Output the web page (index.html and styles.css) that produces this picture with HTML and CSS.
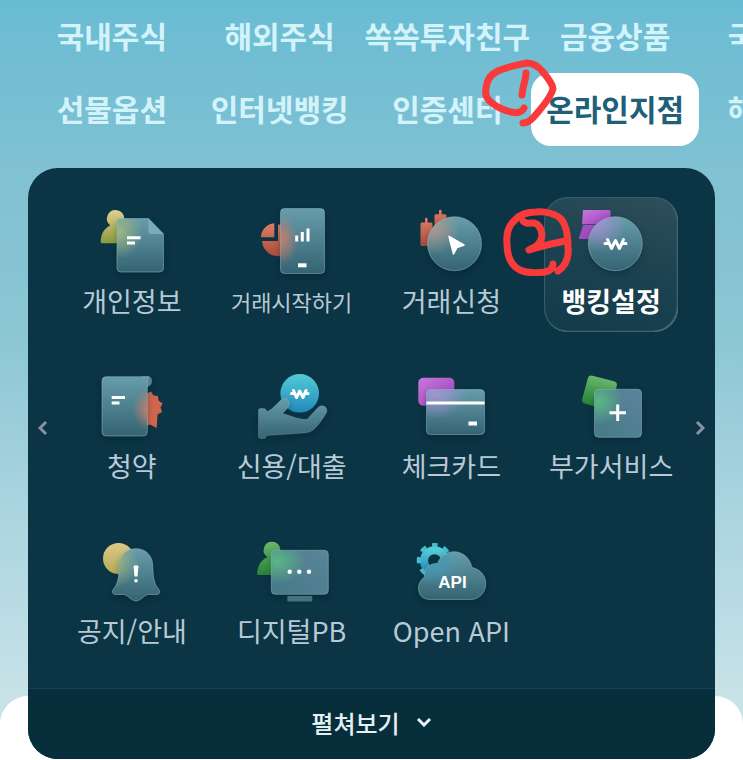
FILE: index.html
```html
<!DOCTYPE html>
<html lang="ko">
  <head>
    <meta charset="UTF-8" />
    <meta name="viewport" content="width=device-width, initial-scale=1.0" />
    <title>온라인지점</title>
    <link rel="stylesheet" href="styles.css">
  </head>
  <body>
    <nav class="tabs">
      <ul class="tab-list">
        <li><a href="#">국내주식</a></li>
        <li><a href="#">해외주식</a></li>
        <li><a href="#">쏙쏙투자친구</a></li>
        <li><a href="#">금융상품</a></li>
        <li><a href="#">국내주식</a></li>
        <li><a href="#">선물옵션</a></li>
        <li><a href="#">인터넷뱅킹</a></li>
        <li><a href="#">인증센터</a></li>
        <li>
          <a class="active" href="#">온라인지점</a>
          <svg class="mark mark1" viewBox="0 0 80 72" aria-hidden="true">
            <path d="M44 50 C42 54 38 55 34 54.500 C26 53 18 50 12 45 C6 41 5 35 6 30 C7 22 10 17 16 14 C24 9 38 7 47 5 C54 5 59 9 63 14 C68 20 73 27 73 31 C71 39 64 47 58 54 C53 60 49 65 43 65" />
            <path d="M46 15 C46 22 43 26 42 37" />
          </svg>
        </li>
        <li><a href="#">해외주식</a></li>
      </ul>
    </nav>

    <main class="panel">
      <div class="panel-body">
        <button class="arrow prev" type="button" aria-label="이전">
          <svg viewBox="0 0 10 16"><path d="M8 2L2 8L8 14" /></svg>
        </button>
        <ul class="menu">
          <li>
            <a class="item" href="#">
              <svg class="icon" viewBox="0 0 100 76" aria-hidden="true">
                <defs>
                  <linearGradient id="glass" x1="0" y1="0" x2="0" y2="1">
                    <stop offset="0" stop-color="#679dab" />
                    <stop offset="1" stop-color="#356372" />
                  </linearGradient>
                  <linearGradient id="glassBlue" x1="1" y1="0" x2="0" y2="1">
                    <stop offset="0" stop-color="#5b849b" />
                    <stop offset="1" stop-color="#457a86" />
                  </linearGradient>
                  <linearGradient id="yellow" x1="0" y1="0" x2="0" y2="1">
                    <stop offset="0" stop-color="#dfd28d" />
                    <stop offset="1" stop-color="#8b9a3c" />
                  </linearGradient>
                  <linearGradient id="sun" x1="0" y1="0" x2="0" y2="1">
                    <stop offset="0" stop-color="#dccb85" />
                    <stop offset="1" stop-color="#b5a958" />
                  </linearGradient>
                  <linearGradient id="red" x1="0" y1="0" x2="0" y2="1">
                    <stop offset="0" stop-color="#df7d67" />
                    <stop offset="1" stop-color="#a94c3b" />
                  </linearGradient>
                  <linearGradient id="purple" x1="0" y1="0" x2="1" y2="1">
                    <stop offset="0" stop-color="#c878db" />
                    <stop offset="1" stop-color="#9c40bd" />
                  </linearGradient>
                  <linearGradient id="green" x1="0" y1="0" x2="0" y2="1">
                    <stop offset="0" stop-color="#68b66b" />
                    <stop offset="1" stop-color="#278338" />
                  </linearGradient>
                  <linearGradient id="cyan" x1="0" y1="0" x2="0" y2="1">
                    <stop offset="0" stop-color="#52cbd9" />
                    <stop offset="1" stop-color="#2389b9" />
                  </linearGradient>
                  <radialGradient id="glowYellow" cx="0.05" cy="0.25" r="0.5">
                    <stop offset="0" stop-color="#a9bd7c" stop-opacity="0.85" />
                    <stop offset="1" stop-color="#a9bd7c" stop-opacity="0" />
                  </radialGradient>
                  <radialGradient id="glowRed" cx="0" cy="0.48" r="0.4">
                    <stop offset="0" stop-color="#d97e68" stop-opacity="0.9" />
                    <stop offset="1" stop-color="#d97e68" stop-opacity="0" />
                  </radialGradient>
                  <radialGradient id="glowSeal" cx="1" cy="0.55" r="0.35">
                    <stop offset="0" stop-color="#d97e68" stop-opacity="0.9" />
                    <stop offset="1" stop-color="#d97e68" stop-opacity="0" />
                  </radialGradient>
                  <radialGradient id="glowCandle" cx="0.1" cy="0.2" r="0.5">
                    <stop offset="0" stop-color="#b99a8e" stop-opacity="0.9" />
                    <stop offset="1" stop-color="#b99a8e" stop-opacity="0" />
                  </radialGradient>
                  <radialGradient id="glowPurple" cx="0.15" cy="0.1" r="0.55">
                    <stop offset="0" stop-color="#a793d6" stop-opacity="0.95" />
                    <stop offset="1" stop-color="#a793d6" stop-opacity="0" />
                  </radialGradient>
                  <radialGradient id="glowGreen" cx="0.1" cy="0.25" r="0.5">
                    <stop offset="0" stop-color="#5cbb83" stop-opacity="0.95" />
                    <stop offset="1" stop-color="#5cbb83" stop-opacity="0" />
                  </radialGradient>
                  <radialGradient id="glowCyan" cx="0.2" cy="0.25" r="0.45">
                    <stop offset="0" stop-color="#419bb9" stop-opacity="0.95" />
                    <stop offset="1" stop-color="#419bb9" stop-opacity="0" />
                  </radialGradient>
                </defs>
                <path fill="url(#yellow)" d="M33.700 5a8.700 8.700 0 0 1 8.700 8.700c0 3-1.400 5.300-3.400 6.900V38.300H20c-1 0-1.400-.6-1.400-1.500C19 29 22 23.500 28.200 20.500A8.700 8.700 0 0 1 33.700 5z" />
                <g class="glass">
                  <path fill="url(#glass)" d="M39 13.500H66.500L81.500 29V63a4 4 0 0 1-4 4H39a4 4 0 0 1-4-4V17.500a4 4 0 0 1 4-4z" />
                  <path fill="url(#glowYellow)" d="M39 13.500H66.500L81.500 29V63a4 4 0 0 1-4 4H39a4 4 0 0 1-4-4V17.500a4 4 0 0 1 4-4z" />
                </g>
                <path fill="#7aabbb" d="M66.500 13.500L81.500 29H69a2.500 2.500 0 0 1-2.500-2.500z" />
                <path class="line" d="M45 32.700H58.500M45 38H53" />
              </svg>
              <span class="label">개인정보</span>
            </a>
          </li>
          <li>
            <a class="item" href="#">
              <svg class="icon" viewBox="0 0 100 76" aria-hidden="true">
                <path fill="url(#red)" d="M32.300 18.300V32.300H19C19 25 25 18.800 32.300 18.300zM36 19.500V36H20A16 16 0 0 0 42 50V20.500C40 19.800 38 19.500 36 19.500z" />
                <g class="glass">
                  <rect fill="url(#glass)" x="38.500" y="3.500" width="44" height="65" rx="4" />
                  <rect fill="url(#glowRed)" x="38.500" y="3.500" width="44" height="65" rx="4" />
                </g>
                <path class="line" d="M54.700 30.500V36.500M60.300 27V36.500M66 23.500V36.500" />
                <path class="line thick" d="M56 60.300H64.500" />
              </svg>
              <span class="label small">거래시작하기</span>
            </a>
          </li>
          <li>
            <a class="item" href="#">
              <svg class="icon" viewBox="0 0 100 76" aria-hidden="true">
                <path fill="url(#red)" d="M24 17.500V14a1.300 1.300 0 0 1 2.600 0V17.500H30a1.500 1.500 0 0 1 1.500 1.500V41H21a1.500 1.500 0 0 1-1.500-1.500V19a1.500 1.500 0 0 1 1.500-1.500z" />
                <path fill="url(#red)" d="M38 9.300V6a1.300 1.300 0 0 1 2.600 0V9.300H44a1.500 1.500 0 0 1 1.500 1.500V31H33.500V10.800A1.500 1.500 0 0 1 35 9.300z" />
                <g class="glass">
                  <circle fill="url(#glass)" cx="53.500" cy="38.700" r="27" />
                  <circle fill="url(#glowCandle)" cx="53.500" cy="38.700" r="27" />
                </g>
                <path fill="#fff" stroke="#fff" stroke-width="1.500" stroke-linejoin="round" d="M48 31.500L63 40L56 42.500L52.500 49z" />
              </svg>
              <span class="label">거래신청</span>
            </a>
          </li>
          <li>
            <a class="item selected" href="#">
              <svg class="icon" viewBox="0 0 100 76" aria-hidden="true">
                <path fill="url(#purple)" d="M22 5H48a1.500 1.500 0 0 1 1.500 1.500V19.300H21z" />
                <path fill="#a24dbd" d="M22 20H49.500V34H19a1 1 0 0 1-1-1.300z" />
                <g class="glass">
                  <circle fill="url(#glass)" cx="54.300" cy="38.700" r="27" />
                  <circle fill="url(#glowPurple)" cx="54.300" cy="38.700" r="27" />
                </g>
                <path class="line won" d="M46.500 34.500L50.500 43.500L54.500 35.500L58.500 43.500L62.500 34.500M44 38.500H48M61 38.500H65" />
              </svg>
              <span class="label">뱅킹설정</span>
            </a>
            <svg class="mark mark2" viewBox="0 0 76 72" aria-hidden="true">
              <path d="M53 58 C53 63 50 65 45 66 C36 67 26 67 20 64 C12 60 7 51 7 38 C6 28 9 19 15 14 C20 8 27 6 36 6 C46 5 56 8 61 13 C67 20 68 31 68 41 C69 51 67 59 58 65" />
              <path d="M23 15 C25 18 29 17 34 17 C39 18 41 22 42 28 C42 33 39 38 35 41 L29 44 C36 42 44 39 65 35" />
            </svg>
          </li>
          <li>
            <a class="item" href="#">
              <svg class="icon" viewBox="0 0 100 76" aria-hidden="true">
                <path fill="#cf674d" d="M60 22L65 23.500L69 21.500L71.500 25.500L76 26L76.500 30.500L80.700 33.500L78.500 37.500L80 42L75.500 44.500L74.700 58L68 54.500L60 57z" />
                <g class="glass">
                  <path fill="#568391" d="M60 6.700H66.500C69 7 70 9 69.500 12C69.500 14 68 16 65.500 16.500H60z" />
                  <path fill="url(#glass)" d="M24 6.700H67C65.500 8 65.300 10 65.300 12V62a4 4 0 0 1-4 4H24a4 4 0 0 1-4-4V10.700a4 4 0 0 1 4-4z" />
                  <path fill="url(#glowSeal)" d="M24 6.700H67C65.500 8 65.300 10 65.300 12V62a4 4 0 0 1-4 4H24a4 4 0 0 1-4-4V10.700a4 4 0 0 1 4-4z" />
                </g>
                <path class="line" d="M29.700 27.500H43M29.700 33H37.500" />
              </svg>
              <span class="label">청약</span>
            </a>
          </li>
          <li>
            <a class="item" href="#">
              <svg class="icon" viewBox="0 0 100 76" aria-hidden="true">
                <circle fill="url(#cyan)" cx="57.700" cy="23.300" r="19.300" />
                <path class="line won" d="M51.500 20.500L54.500 27.500L57.700 21L61 27.500L64 20.500M49.500 23.500H52.500M63 23.500H66" />
                <g class="glass">
                  <path fill="url(#glass)" d="M18.500 38.500H21.500C23.500 38.500 24.500 40 24.500 41.500C30 40.500 34 34 39.500 29.500C43 26.500 48.500 29.500 47.500 34C46.500 38 43.500 40.500 40.500 43.500C48 45.500 56 49.500 65 49.500L76 37.500C80 33.500 86.500 37 84.500 42.500C81 49 76 56 70.500 60.500C67 63 60 63 54 63.500L24.500 65.500C24.500 67.500 23.500 68.500 21.500 68.500H18.500A2 2 0 0 1 16.500 66.500V40.500A2 2 0 0 1 18.500 38.500z" />
                </g>
              </svg>
              <span class="label">신용/대출</span>
            </a>
          </li>
          <li>
            <a class="item" href="#">
              <svg class="icon" viewBox="0 0 100 76" aria-hidden="true">
                <rect fill="url(#purple)" x="17.300" y="7.700" width="36" height="28" rx="5" />
                <g class="glass">
                  <rect fill="url(#glass)" x="25.500" y="19.500" width="58" height="45" rx="4" />
                  <rect fill="url(#glowPurple)" x="25.500" y="19.500" width="58" height="45" rx="4" />
                </g>
                <path class="line flat" d="M25.500 33H83.500" />
                <path class="line thick" d="M67.500 53.500H76" />
              </svg>
              <span class="label">체크카드</span>
            </a>
          </li>
          <li>
            <a class="item" href="#">
              <svg class="icon" viewBox="0 0 100 76" aria-hidden="true">
                <rect fill="url(#green)" x="23.500" y="8" width="30" height="29" rx="4" transform="rotate(15 38.500 22.500)" />
                <g class="glass">
                  <rect fill="url(#glassBlue)" x="33.500" y="19.300" width="47" height="48" rx="4" />
                  <rect fill="url(#glowGreen)" x="33.500" y="19.300" width="47" height="48" rx="4" />
                </g>
                <path class="line flat" d="M48.500 42.700H65M56.700 34.500V51" />
              </svg>
              <span class="label">부가서비스</span>
            </a>
          </li>
          <li>
            <a class="item" href="#">
              <svg class="icon" viewBox="0 0 100 76" aria-hidden="true">
                <circle fill="url(#sun)" cx="36.500" cy="23.500" r="15.500" />
                <g class="glass">
                  <path fill="url(#glass)" d="M54 13.700C64 13.700 70.500 21 70.700 30C71 42 72 49 76.500 54C79 57 77.500 59.500 74.500 59.500H67C62 59.500 59 66 54 66C49 66 46 59.500 41 59.500H33.500C30.500 59.500 29.500 57 31.500 54C36 49 37 42 37.300 30C37.500 21 44 13.700 54 13.700z" />
                  <path fill="url(#glowYellow)" d="M54 13.700C64 13.700 70.500 21 70.700 30C71 42 72 49 76.500 54C79 57 77.500 59.500 74.500 59.500H67C62 59.500 59 66 54 66C49 66 46 59.500 41 59.500H33.500C30.500 59.500 29.500 57 31.500 54C36 49 37 42 37.300 30C37.500 21 44 13.700 54 13.700z" />
                </g>
                <path fill="#fff" d="M51.500 31Q54 29.500 56.500 31L55.500 41.500H52.500z" />
                <circle fill="#fff" cx="54" cy="45.700" r="1.800" />
              </svg>
              <span class="label">공지/안내</span>
            </a>
          </li>
          <li>
            <a class="item" href="#">
              <svg class="icon" viewBox="0 0 100 76" aria-hidden="true">
                <path fill="url(#green)" d="M30 6.700a8.300 8.300 0 0 1 6 14V40H16.500c-1 0-1.500-.6-1.500-1.500C15.500 31 19 25 25.500 22A8.300 8.300 0 0 1 30 6.700z" />
                <g class="glass">
                  <rect fill="url(#glassBlue)" x="29.300" y="15.300" width="57" height="44" rx="4" />
                  <rect fill="url(#glowGreen)" x="29.300" y="15.300" width="57" height="44" rx="4" />
                </g>
                <rect fill="#47717f" x="45.300" y="61" width="25" height="5.500" rx="1" />
                <circle fill="#fff" cx="47.700" cy="36.700" r="2.200" />
                <circle fill="#fff" cx="57.300" cy="36.700" r="2.200" />
                <circle fill="#fff" cx="67" cy="36.700" r="2.200" />
              </svg>
              <span class="label">디지털PB</span>
            </a>
          </li>
          <li>
            <a class="item" href="#">
              <svg class="icon" viewBox="0 0 100 76" aria-hidden="true">
                <circle fill="none" stroke="url(#cyan)" stroke-width="8" cx="33.500" cy="25.700" r="10.500" />
                <circle fill="none" stroke="#48bdd0" stroke-width="4" stroke-dasharray="6.300 6.070" stroke-dashoffset="3.150" transform="rotate(-90 33.500 25.700)" cx="33.500" cy="25.700" r="15.750" />
                <g class="glass">
                  <path fill="url(#glass)" d="M29 64.500C22 64.500 17.500 60 17.500 53.500C17.500 48.500 20 44.500 23.500 42C22.500 34 29 28 36.500 28.500C39 21.500 45.500 16.700 53 16.700C62 16.700 69 23 71 32.500C79 34 84.700 40.500 84.700 48.500C84.700 58 78 64.500 69.500 64.500z" />
                  <path fill="url(#glowCyan)" d="M29 64.500C22 64.500 17.500 60 17.500 53.500C17.500 48.500 20 44.500 23.500 42C22.500 34 29 28 36.500 28.500C39 21.500 45.500 16.700 53 16.700C62 16.700 69 23 71 32.500C79 34 84.700 40.500 84.700 48.500C84.700 58 78 64.500 69.500 64.500z" />
                </g>
                <text class="api" x="51.500" y="53" text-anchor="middle">API</text>
              </svg>
              <span class="label">Open API</span>
            </a>
          </li>
        </ul>
        <button class="arrow next" type="button" aria-label="다음">
          <svg viewBox="0 0 10 16"><path d="M2 2L8 8L2 14" /></svg>
        </button>
      </div>
      <button class="expand" type="button">
        펼쳐보기
        <svg viewBox="0 0 16 10" aria-hidden="true"><path d="M2 2L8 8L14 2" /></svg>
      </button>
    </main>
    <div class="sheet"></div>
  </body>
</html>
```
FILE: styles.css
```css
* {
  margin: 0;
  padding: 0;
  box-sizing: border-box;
  font-family: "Noto Sans CJK KR", "Noto Sans", sans-serif;
}

body {
  min-height: 100vh;
  overflow-x: hidden;
  background: linear-gradient(#69bcd3 0px, #80c1d3 170px, #8bc6d3 330px, #a5d2de 480px, #c8e3e8 700px);
}

ul {
  list-style: none;
}

a {
  color: inherit;
  text-decoration: none;
}

button {
  border: none;
  background: none;
  cursor: pointer;
}

/* top tabs, the fifth column runs off the right edge */
.tabs {
  padding: 0 44px 22px 28px;
}

.tab-list {
  display: grid;
  grid-template-columns: repeat(5, 25%);
  grid-auto-rows: 73px;
}

.tab-list li {
  position: relative;
}

.tab-list a {
  display: flex;
  align-items: center;
  justify-content: center;
  height: 100%;
  padding-bottom: 4px;
  border-radius: 20px;
  color: #d3f3fb;
  font-size: 30px;
  font-weight: 700;
  white-space: nowrap;
}

.tab-list .active {
  background: #fff;
  color: #1f5f78;
}

/* menu panel */
.panel {
  position: relative;
  z-index: 1;
  margin: 0 28px;
  border-radius: 30px;
  overflow: hidden;
  background: #0b3445;
}

.panel-body {
  display: flex;
  padding: 29px 0 26px;
}

.menu {
  flex: 1;
  display: grid;
  grid-template-columns: repeat(4, 1fr);
  gap: 30px 26px;
}

.menu li {
  position: relative;
}

.item {
  display: flex;
  flex-direction: column;
  align-items: center;
  padding: 8px 0 11px;
  border-radius: 24px;
  color: #b8cad6;
}

.icon {
  width: 100px;
  height: 76px;
}

.label {
  font-size: 27px;
  line-height: 40px;
  white-space: nowrap;
}

.small {
  font-size: 22px;
}

.selected {
  color: #fff;
  background: linear-gradient(200deg, #2f4f5b, #1b4250 50%, #123b4a);
  box-shadow: inset 0 0 1px 1px #38606e, inset -1px -1px 1px #6f929c;
}

.selected .label {
  font-weight: 700;
}

.glass {
  stroke: #8fb9c4;
  stroke-opacity: 0.3;
  filter: drop-shadow(0 3px 3px rgba(0, 20, 30, 0.3));
}

.line {
  fill: none;
  stroke: #fff;
  stroke-width: 3px;
}

.thick {
  stroke-width: 4px;
}

.won {
  stroke-width: 3px;
  stroke-linejoin: round;
  stroke-linecap: round;
}

.api {
  fill: #fff;
  font: 700 17px "Liberation Sans", sans-serif;
}

.arrow {
  width: 37px;
}

.arrow svg {
  width: 10px;
  height: 16px;
}

.arrow path {
  fill: none;
  stroke: #8a90a8;
  stroke-width: 3px;
}

.prev {
  padding-right: 7px;
}

.next {
  padding-left: 7px;
}

.expand {
  display: flex;
  align-items: center;
  justify-content: center;
  gap: 16px;
  width: 100%;
  height: 71px;
  padding-bottom: 4px;
  border-top: 1px solid #184253;
  background: #062f3b;
  color: #e6f0f3;
  font-size: 24px;
  font-weight: 500;
}

.expand svg {
  width: 16px;
  height: 10px;
}

.expand path {
  fill: none;
  stroke: #e6f0f3;
  stroke-width: 3px;
}

/* white sheet behind the panel */
.sheet {
  height: 64px;
  margin-top: -63px;
  border-radius: 28px 28px 0 0;
  background: #fff;
}

/* hand drawn marks */
.mark {
  position: absolute;
  z-index: 2;
  fill: none;
  stroke: #f93a3a;
  stroke-width: 7px;
  stroke-linecap: round;
  stroke-linejoin: round;
  pointer-events: none;
}

.mark1 {
  top: -15px;
  left: -51px;
  width: 80px;
  height: 72px;
}

.mark2 {
  top: 9px;
  left: -44px;
  width: 76px;
  height: 72px;
}
```
